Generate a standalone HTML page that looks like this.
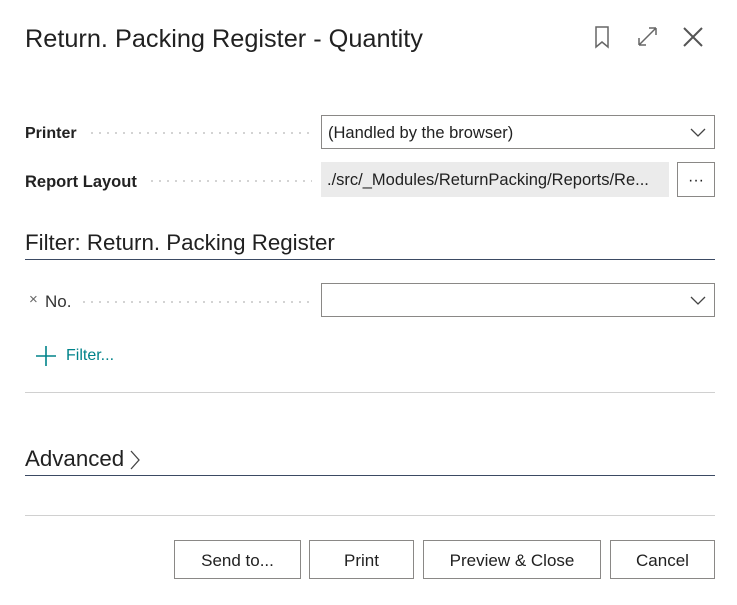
<!DOCTYPE html>
<html><head><style>
*{box-sizing:border-box;margin:0;padding:0}
body{width:737px;height:605px;background:#fff;font-family:"Liberation Sans",sans-serif;color:#212121;position:relative;overflow:hidden}
.a{position:absolute}
.lbl{font-weight:bold;color:#222}
.dots{height:2px;background-image:radial-gradient(circle,#c8c8c8 0.9px,transparent 1.1px);background-size:8px 2px;background-repeat:repeat-x}
.box{border:1px solid #8a8886;background:#fff}
.btn{position:absolute;top:540px;height:39px;border:1px solid #8a8886;background:#fff;font-size:17px;text-align:center;line-height:39px;color:#212121}
</style></head><body>
<div class="a" style="left:25px;top:25px;font-size:25.3px;color:#212121">Return. Packing Register - Quantity</div>
<svg class="a" style="left:590px;top:24px" width="120" height="26" viewBox="0 0 120 26">
<path d="M6 3h12v20l-6-5-6 5z" fill="none" stroke="#666" stroke-width="1.5"/>
<path d="M49 21l17-17M49 21v-7M49 21h7M66 4h-7M66 4v7" fill="none" stroke="#666" stroke-width="1.5"/>
<path d="M94 4l18 18M112 4l-18 18" fill="none" stroke="#555" stroke-width="2"/>
</svg>
<div class="a lbl" style="left:25px;top:125px;font-size:16px">Printer</div>
<div class="a dots" style="left:88px;top:132px;width:224px"></div>
<div class="a box" style="left:321px;top:115px;width:394px;height:34px;font-size:16.5px;line-height:34px;padding-left:6px">(Handled by the browser)</div>
<svg class="a" style="left:690px;top:126px" width="16" height="12"><path d="M1 3l7 7 7-7" fill="none" stroke="#444" stroke-width="1.3"/></svg>
<div class="a lbl" style="left:25px;top:173px;font-size:16.5px">Report Layout</div>
<div class="a dots" style="left:148px;top:180px;width:164px"></div>
<div class="a" style="left:321px;top:162px;width:348px;height:35px;background:#ebebeb;font-size:16.5px;line-height:37px;padding-left:6px;white-space:nowrap;overflow:hidden">./src/_Modules/ReturnPacking/Reports/Re...</div>
<div class="a box" style="left:677px;top:162px;width:38px;height:35px;text-align:center;line-height:36px;font-size:16px;letter-spacing:0px">···</div>
<div class="a" style="left:25px;top:230px;font-size:22.3px">Filter: Return. Packing Register</div>
<div class="a" style="left:25px;top:259px;width:690px;height:1px;background:#3b4a63"></div>
<div class="a" style="left:29px;top:291px;font-size:15px;color:#666">×</div>
<div class="a" style="left:45px;top:292px;font-size:17px;color:#333">No.</div>
<div class="a dots" style="left:80px;top:301px;width:232px"></div>
<div class="box a" style="left:321px;top:283px;width:394px;height:34px"></div>
<svg class="a" style="left:690px;top:294px" width="16" height="12"><path d="M1 3l7 7 7-7" fill="none" stroke="#444" stroke-width="1.3"/></svg>
<svg class="a" style="left:35px;top:345px" width="22" height="22"><path d="M11 1v20M1 11h20" stroke="#00838a" stroke-width="1.6"/></svg>
<div class="a" style="left:66px;top:347px;font-size:16px;color:#00838a">Filter...</div>
<div class="a" style="left:25px;top:392px;width:690px;height:1px;background:#d0d0d0"></div>
<div class="a" style="left:25px;top:446px;font-size:22.3px">Advanced</div>
<svg class="a" style="left:128px;top:449px" width="14" height="22"><path d="M3 2l8 9-8 9" fill="none" stroke="#444" stroke-width="1.3"/></svg>
<div class="a" style="left:25px;top:475px;width:690px;height:1px;background:#3b4a63"></div>
<div class="a" style="left:25px;top:515px;width:690px;height:1px;background:#d0d0d0"></div>
<div class="btn" style="left:174px;width:127px">Send to...</div>
<div class="btn" style="left:309px;width:105px">Print</div>
<div class="btn" style="left:423px;width:178px">Preview &amp; Close</div>
<div class="btn" style="left:610px;width:105px">Cancel</div>
</body></html>
